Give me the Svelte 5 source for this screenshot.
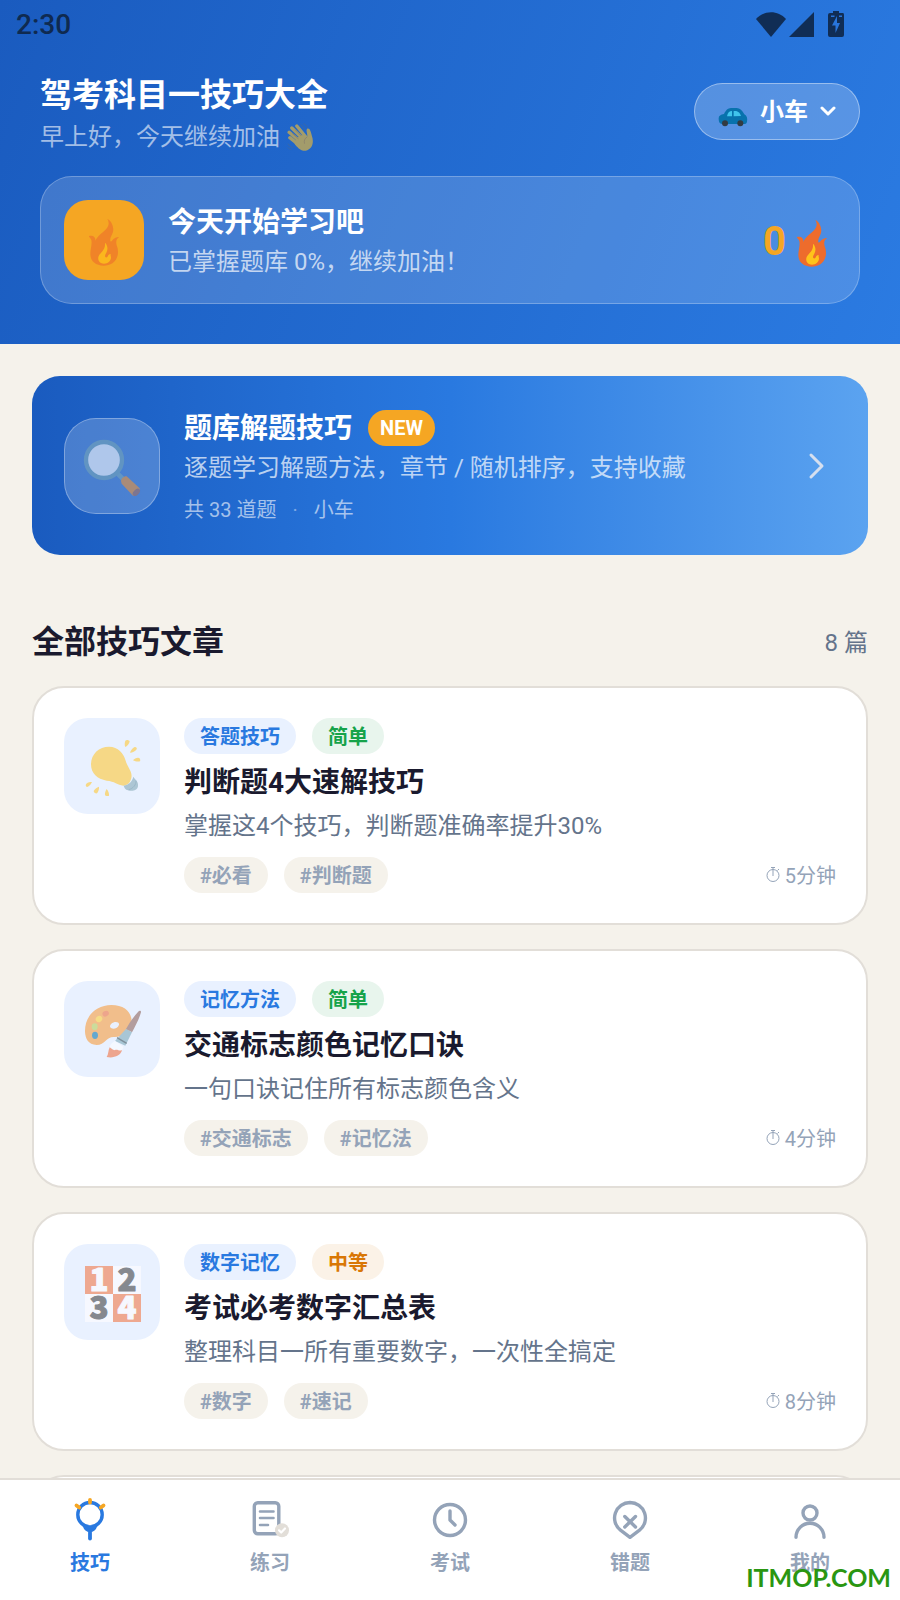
<script>
    let vehicle = $state("小车");
    let activeTab = $state("tips");

    const articles = [
        { id: 1, icon: "bulb", category: "答题技巧", level: "简单", tone: "easy", title: "判断题4大速解技巧", desc: "掌握这4个技巧，判断题准确率提升30%", tags: ["必看", "判断题"], minutes: 5 },
        { id: 2, icon: "palette", category: "记忆方法", level: "简单", tone: "easy", title: "交通标志颜色记忆口诀", desc: "一句口诀记住所有标志颜色含义", tags: ["交通标志", "记忆法"], minutes: 4 },
        { id: 3, icon: "numbers", category: "数字记忆", level: "中等", tone: "medium", title: "考试必考数字汇总表", desc: "整理科目一所有重要数字，一次性全搞定", tags: ["数字", "速记"], minutes: 8 }
    ];

    const tabs = [
        { id: "tips", label: "技巧" },
        { id: "practice", label: "练习" },
        { id: "exam", label: "考试" },
        { id: "wrong", label: "错题" },
        { id: "mine", label: "我的" }
    ];
</script>

{#snippet flame()}
    <svg class="flame" viewBox="0 0 92 144" aria-hidden="true">
        <path fill="#ee6c2c" d="M56 2C70 10 76 28 73 42C70 52 63 58 65 70C72 74 70 57 92 57C83 62 81 70 84 82C88 92 89 102 87 112C82 134 64 143 45 143C22 143 5 130 5 108C5 94 11 78 8 66C6 59 0 57 1 54C14 50 22 58 20 70C24 56 40 46 52 34C62 24 62 12 56 2Z" />
        <path fill="#ffc31a" d="M50 75C57 84 58 92 54 102C50 110 47 114 51 118C60 120 54 110 66 108C65 112 67 114 67 120C65 130 58 137 46 137C34 137 27 129 29 117C32 104 51 98 49 76Z" />
    </svg>
{/snippet}

{#snippet articleIcon(name)}
    <svg class="article-icon" viewBox="0 0 288 288" aria-hidden="true">
        {#if name === "bulb"}
            <g fill="#f6d886">
                <path d="M81 139C81 108 105 86 135 86C163 87 178 104 185 128C191 150 206 160 202 180C198 196 190 202 178 203C160 200 152 190 128 188C100 184 81 166 81 139Z" />
                <path d="M184 68C188 64 195 66 197 70C196 77 191 84 184 87C181 82 182 74 184 68Z" />
                <path d="M212 87C216 86 220 90 218 94C213 101 206 104 198 104C200 97 205 91 212 87Z" />
                <path d="M222 119C228 119 230 125 228 130C221 132 213 130 207 127C211 122 216 120 222 119Z" />
                <path d="M84 192C79 202 74 206 69 207C65 206 64 200 67 197C72 193 78 192 84 192Z" />
                <path d="M105 206C106 213 103 221 99 226C94 227 89 223 89 219C92 213 98 208 105 206Z" />
                <path d="M128 213C133 219 136 227 135 233C131 235 125 234 123 232C122 226 124 219 128 213Z" />
            </g>
            <path fill="#adc6d4" d="M208 176C214 186 224 190 222 205C219 220 202 220 192 217C184 215 180 208 179 203C194 200 204 192 208 176Z" />
            <path fill="none" stroke="#9bb8c9" stroke-width="3" d="M194 215C207 212 217 200 216 188" />
        {:else if name === "palette"}
            <path fill="#f1be8b" fill-rule="evenodd" d="M63 152C62 104 98 72 142 72C182 72 204 94 203 124C202 150 180 168 152 168C126 166 124 192 98 192C72 190 64 172 63 152ZM139 139C145 148 162 142 165 131C166 120 149 121 142 128C138 132 137 136 139 139Z" />
            <ellipse cx="125" cy="98" rx="10" ry="8" fill="#eda58c" transform="rotate(-30 125 98)" />
            <ellipse cx="105" cy="114" rx="10" ry="9" fill="#f5dc86" transform="rotate(-35 105 114)" />
            <ellipse cx="92" cy="137" rx="9" ry="10" fill="#cbdc9b" />
            <ellipse cx="93" cy="163" rx="9" ry="11" fill="#65a8d0" />
            <path fill="#b39d9e" d="M222 93C226 87 232 88 231 94C226 112 214 136 204 154L186 144C196 126 210 106 222 93Z" />
            <path fill="#a8c6d5" d="M186 144L204 154L184 194L153 180Z" />
            <path stroke="#7e909c" stroke-width="4" d="M159 170L188 187" />
            <path fill="#f4f8ff" d="M153 180L178 197C176 208 172 211 164 213L137 204C136 193 143 185 153 180Z" />
            <path fill="#eda58e" d="M137 199C144 204 149 209 153 207C159 204 165 210 174 208C170 224 148 233 128 228C134 220 132 208 137 199Z" />
        {:else}
            <path fill="#f6f8ff" d="M63 66H231V234H63Z" />
            <path fill="#eea890" d="M63 66H147V150H63ZM147 150H231V234H147Z" />
            <g class="digits">
                <text class="light" x="105" y="141">1</text>
                <text class="dark" x="189" y="141">2</text>
                <text class="dark" x="105" y="226">3</text>
                <text class="light" x="189" y="226">4</text>
            </g>
        {/if}
    </svg>
{/snippet}

{#snippet tabIcon(name)}
    <svg class="tab-icon" viewBox="0 0 48 48" fill="none" stroke="currentColor" stroke-width="3.400" stroke-linecap="round" stroke-linejoin="round" aria-hidden="true">
        {#if name === "tips"}
            <circle cx="24" cy="18.700" r="12.200" />
            <path fill="currentColor" stroke-width="2" d="M17.500 29.500C20 37 28 37 30.500 29.500Q24 33 17.500 29.500Z" />
            <path stroke-width="3.800" d="M24 36.500V42.500" />
            <path stroke="#f5a623" stroke-width="3.800" d="M24 4V6.500M10.500 9.500L13.200 11.500M37.500 9.500L34.800 11.500" />
        {:else if name === "practice"}
            <rect x="8.300" y="6.800" width="24.500" height="31" rx="3.500" />
            <path stroke-width="2.600" d="M14 15.500H27.500M14 22H27.500M14 29H22" />
            <circle cx="36" cy="34.300" r="7" fill="#e2ded8" stroke="none" />
            <path stroke="#fff" stroke-width="2.200" d="M33 34.300L35.200 36.500L39 32.500" />
        {:else if name === "exam"}
            <circle cx="24" cy="24" r="15.500" />
            <path d="M24 15V24L29 29" />
        {:else if name === "wrong"}
            <path d="M24 6.500A15.500 15.500 0 0 1 33.500 34.200L24 41.300L14.500 34.200A15.500 15.500 0 0 1 24 6.500Z" />
            <path d="M18.800 20.500L29.500 31M29.500 20.500L18.800 31" />
        {:else}
            <circle cx="24" cy="17" r="7" />
            <path d="M10 41.300A14 14 0 0 1 38 41.300" />
        {/if}
    </svg>
{/snippet}

<div class="app">
    <header>
        <div class="status-bar">
            <span>2:30</span>
            <svg class="status-icons" viewBox="0 0 88 28" aria-hidden="true">
                <path d="M0 9C8 0 22 0 30 9L15 27Z" />
                <path d="M33 27L58 2V27Z" />
                <path fill-rule="evenodd" d="M77 1H83V3H87Q88 3 88 5V25Q88 27 86 27H74Q72 27 72 25V5Q72 3 74 3H77ZM75 5.500V7H78.500V5.500ZM83 5.500V7H86V5.500ZM81 6L76 15.500H79.500V23L84 13H81Z" />
            </svg>
        </div>

        <div class="header-row">
            <div>
                <h1>驾考科目一技巧大全</h1>
                <p class="greeting">
                    早上好，今天继续加油
                    <svg class="wave" viewBox="0 0 80 84" aria-hidden="true">
                        <g fill="none" stroke="#fbc02d" stroke-width="10" stroke-linecap="round">
                            <path d="M8 44L38 68M6 28L42 58M14 15L48 48M29 9L56 42" />
                        </g>
                        <path fill="#fbc02d" d="M30 44L52 34L60 42C62 32 55 22 60 17C68 14 71 25 74 38C84 66 68 84 49 83C40 82 29 72 22 62Z" />
                        <path fill="none" stroke="#c88a2c" stroke-width="2" d="M60 42C52 47 50 53 52 62M15 31L34 48M24 20L42 39" />
                        <path fill="none" stroke="#4b6a91" stroke-width="3" d="M40 5Q50 10 52 20M49 1Q60 8 61 14M2 62Q8 73 18 74M2 73Q6 79 12 80" />
                    </svg>
                </p>
            </div>
            <label class="vehicle">
                <svg class="car" viewBox="0 0 90 90" aria-hidden="true">
                    <path fill="#0872ad" d="M2 64C2 56 8 53 18 51C24 39 29 34 39 33H56C66 34 73 40 79 52C87 56 89 64 87 74C86 80 82 81 76 81H12C5 80 2 76 2 64Z" />
                    <path fill="#40c4ec" d="M27 58C29 47 34 42 42 42V58ZM47 42C59 41 65 45 69 57L47 58Z" />
                    <circle cx="21" cy="79" r="9" fill="#333b42" />
                    <circle cx="67" cy="79" r="9" fill="#333b42" />
                </svg>
                <select bind:value={vehicle} aria-label="车型">
                    <option>小车</option>
                </select>
                <svg class="arrow" viewBox="0 0 16 16" aria-hidden="true"><path d="M2 4L8 10L14 4" /></svg>
            </label>
        </div>

        <div class="streak">
            <div class="streak-icon">{@render flame()}</div>
            <div class="streak-text">
                <h2>今天开始学习吧</h2>
                <p>已掌握题库 0%，继续加油！</p>
            </div>
            <div class="streak-count">
                <span>0</span>
                {@render flame()}
            </div>
        </div>
    </header>

    <main>
        <a class="banner" href="#questions">
            <div class="banner-icon">
                <svg viewBox="-5 -11 180 180" aria-hidden="true">
                    <path stroke="#6396c4" stroke-width="14" d="M101 101L120 120" />
                    <circle cx="61" cy="61" r="54" fill="#afc7eb" stroke="#6194c2" stroke-width="13" />
                    <path fill="#a98b78" d="M112 124C112 117 122 108 129 110L168 146C170 154 158 168 148 168L114 132Z" />
                    <ellipse cx="158" cy="158" rx="13" ry="8" fill="#7d7590" transform="rotate(-45 158 158)" />
                </svg>
            </div>
            <div class="banner-body">
                <div class="banner-title">
                    <h2>题库解题技巧</h2>
                    <span class="new">NEW</span>
                </div>
                <p class="banner-desc">逐题学习解题方法，章节 / 随机排序，支持收藏</p>
                <p class="banner-meta"><span>共 33 道题</span><span class="dot">·</span><span>小车</span></p>
            </div>
            <svg class="chevron" viewBox="0 0 40 40" aria-hidden="true"><path d="M15 9L26 20L15 31" /></svg>
        </a>

        <div class="section-head">
            <h2>全部技巧文章</h2>
            <span>8 篇</span>
        </div>

        <div class="list">
            {#each articles as article (article.id)}
                <a class="card" href="#article-{article.id}">
                    <div class="card-icon">{@render articleIcon(article.icon)}</div>
                    <div class="card-body">
                        <div class="tags">
                            <span class="tag category">{article.category}</span>
                            <span class="tag {article.tone}">{article.level}</span>
                        </div>
                        <h3>{article.title}</h3>
                        <p>{article.desc}</p>
                        <div class="card-foot">
                            <div class="tags">
                                {#each article.tags as tag}
                                    <span class="tag">#{tag}</span>
                                {/each}
                            </div>
                            <span class="time">
                                <svg viewBox="0 0 14 16" aria-hidden="true">
                                    <circle cx="7" cy="9.500" r="6" />
                                    <path d="M7 10V2M5 1.500H9M11.500 4.500L13 3" />
                                </svg>
                                {article.minutes}分钟
                            </span>
                        </div>
                    </div>
                </a>
            {/each}
            <!-- hueco de la siguiente tarjeta, queda bajo la barra -->
            <div class="card card-next"></div>
        </div>
    </main>

    <nav>
        {#each tabs as tab (tab.id)}
            <button class:active={activeTab === tab.id} onclick={() => (activeTab = tab.id)}>
                {@render tabIcon(tab.id)}
                <span>{tab.label}</span>
            </button>
        {/each}
    </nav>
    <span class="watermark">ITMOP.COM</span>
</div>

<style>
    :global(body) { margin: 0; background: #f5f2eb; }
    h1, h2, h3, p { margin: 0; }
    a { color: inherit; text-decoration: none; }
    svg { display: block; flex: none; }

    .app { position: relative; height: 100vh; display: flex; flex-direction: column; overflow: hidden; font-family: Roboto, "Noto Sans CJK SC", sans-serif; color: #1a1a2e; }

    /* Cabecera */
    header { flex: none; padding: 0 40px 40px; color: #fff; background: linear-gradient(111deg, #1a5bbf, #2b7be2); }
    .status-bar { display: flex; align-items: center; justify-content: space-between; height: 48px; margin: 0 -24px 24px; padding-right: 40px; font-size: 28px; font-weight: 500; color: #0f2a50; }
    .status-bar svg { width: 88px; height: 28px; fill: #102d55; }
    .header-row { display: flex; align-items: center; justify-content: space-between; margin-bottom: 25px; }
    h1 { padding-top: 2px; font-size: 32px; line-height: 42px; font-weight: 700; }
    .greeting { display: flex; align-items: center; gap: 7px; margin-top: 7px; font-size: 24px; line-height: 28px; color: rgba(255, 255, 255, 0.6); }
    .wave { width: 27px; height: 28px; opacity: 0.6; }

    .vehicle { display: flex; align-items: center; gap: 12px; box-sizing: border-box; height: 57px; padding: 0 23px; border: 1px solid rgba(255, 255, 255, 0.4); border-radius: 29px; background: rgba(255, 255, 255, 0.22); }
    .vehicle select { appearance: none; border: 0; padding: 0; background: none; color: #fff; font: inherit; font-size: 24px; font-weight: 700; }
    .vehicle option { color: #1a1a2e; }
    .car { width: 30px; height: 30px; }
    .arrow { width: 16px; height: 16px; fill: none; stroke: #fff; stroke-width: 3; stroke-linecap: round; stroke-linejoin: round; }

    .streak { display: flex; align-items: center; gap: 24px; padding: 23px; border: 1px solid rgba(255, 255, 255, 0.25); border-radius: 32px; background: rgba(255, 255, 255, 0.16); }
    .streak-icon { display: flex; align-items: center; justify-content: center; width: 80px; height: 80px; border-radius: 24px; background: #f5a623; }
    .streak-icon .flame { opacity: 0.6; }
    .flame { width: 48px; height: 48px; margin-top: 4px; }
    .streak-text { flex: 1; padding-top: 2px; }
    .streak-text h2 { font-size: 28px; line-height: 36px; }
    .streak-text p { margin-top: 5px; font-size: 24px; line-height: 32px; color: rgba(255, 255, 255, 0.7); }
    .streak-count { display: flex; align-items: center; gap: 2px; padding-top: 2px; font-size: 40px; font-weight: 700; color: #f5a623; }

    /* Contenido */
    main { flex: 1; min-height: 0; overflow-y: auto; scrollbar-width: none; padding: 32px 32px 0; }
    .banner { display: flex; align-items: center; gap: 24px; padding: 32px; border-radius: 28px; color: #fff; background: linear-gradient(90deg, #1a5bbf, #2979e0 50%, #5ba3f0); }
    .banner-icon { display: flex; align-items: center; justify-content: center; box-sizing: border-box; width: 96px; height: 96px; border: 1px solid rgba(255, 255, 255, 0.3); border-radius: 32px; background: rgba(255, 255, 255, 0.2); }
    .banner-icon svg { width: 60px; height: 60px; }
    .banner-body { flex: 1; }
    .banner-title { display: flex; align-items: center; gap: 16px; }
    .banner-title h2 { padding-top: 3px; font-size: 28px; line-height: 36px; }
    .new { padding: 0 12px; border-radius: 18px; background: #f5a623; font-size: 20px; line-height: 36px; font-weight: 700; }
    .banner-desc { margin-top: 4px; font-size: 24px; line-height: 34px; color: rgba(255, 255, 255, 0.7); }
    .banner-meta { display: flex; gap: 16px; margin-top: 12px; font-size: 20px; line-height: 26px; color: rgba(255, 255, 255, 0.6); }
    .dot { opacity: 0.7; }
    .chevron { width: 40px; height: 40px; fill: none; stroke: #d5dfef; stroke-width: 3; stroke-linecap: round; stroke-linejoin: round; }

    .section-head { display: flex; align-items: center; justify-content: space-between; margin: 64px 0 24px; }
    .section-head h2 { padding-top: 3px; font-size: 32px; line-height: 40px; }
    .section-head span { font-size: 24px; color: #64748b; }

    /* Tarjetas */
    .list { display: flex; flex-direction: column; gap: 24px; }
    .card { display: flex; align-items: flex-start; gap: 24px; padding: 30px; border: 2px solid #e2ded8; border-radius: 32px; background: #fff; }
    .card-next { min-height: 96px; }
    .card-icon { border-radius: 24px; background: #e9f1ff; }
    .article-icon { width: 96px; height: 96px; }
    .digits { font-family: "Noto Sans CJK SC", sans-serif; font-size: 94px; font-weight: 900; text-anchor: middle; stroke-width: 3; stroke-linejoin: round; }
    .light { fill: #f6f8ff; stroke: #f6f8ff; }
    .dark { fill: #85888f; stroke: #85888f; }
    .card-body { flex: 1; }
    .card h3 { margin-top: 9px; font-size: 28px; line-height: 40px; }
    .card p { margin-top: 7px; font-size: 24px; line-height: 33px; color: #64748b; }
    .card-foot { display: flex; align-items: center; justify-content: space-between; margin-top: 14px; }
    .tags { display: flex; gap: 16px; }
    .tag { padding: 2px 16px 0; border-radius: 18px; font-size: 20px; line-height: 34px; font-weight: 700; color: #94a3b8; background: #f5f2eb; }
    .category { color: #2979e0; background: #e9f1ff; }
    .easy { color: #16a34a; background: #e8f5ed; }
    .medium { color: #d97706; background: #fbf2e7; }
    .time { display: flex; align-items: center; gap: 5px; padding-bottom: 2px; font-size: 20px; color: #94a3b8; }
    .time svg { width: 14px; height: 16px; fill: none; stroke: currentColor; stroke-width: 1; }

    /* Barra inferior */
    nav { flex: none; display: flex; border-top: 2px solid #e2ded8; background: #fff; }
    nav button { flex: 1; display: flex; flex-direction: column; align-items: center; gap: 7px; padding: 16px 0 25px; border: 0; background: none; color: #94a3b8; font: inherit; font-size: 20px; line-height: 24px; font-weight: 700; cursor: pointer; }
    nav button.active { color: #2979e0; }
    .tab-icon { width: 48px; height: 48px; }
    .watermark { position: absolute; right: 9px; bottom: 8px; font-family: Lato, sans-serif; font-size: 25px; line-height: 30px; font-weight: 700; color: #2a9611; }
</style>
